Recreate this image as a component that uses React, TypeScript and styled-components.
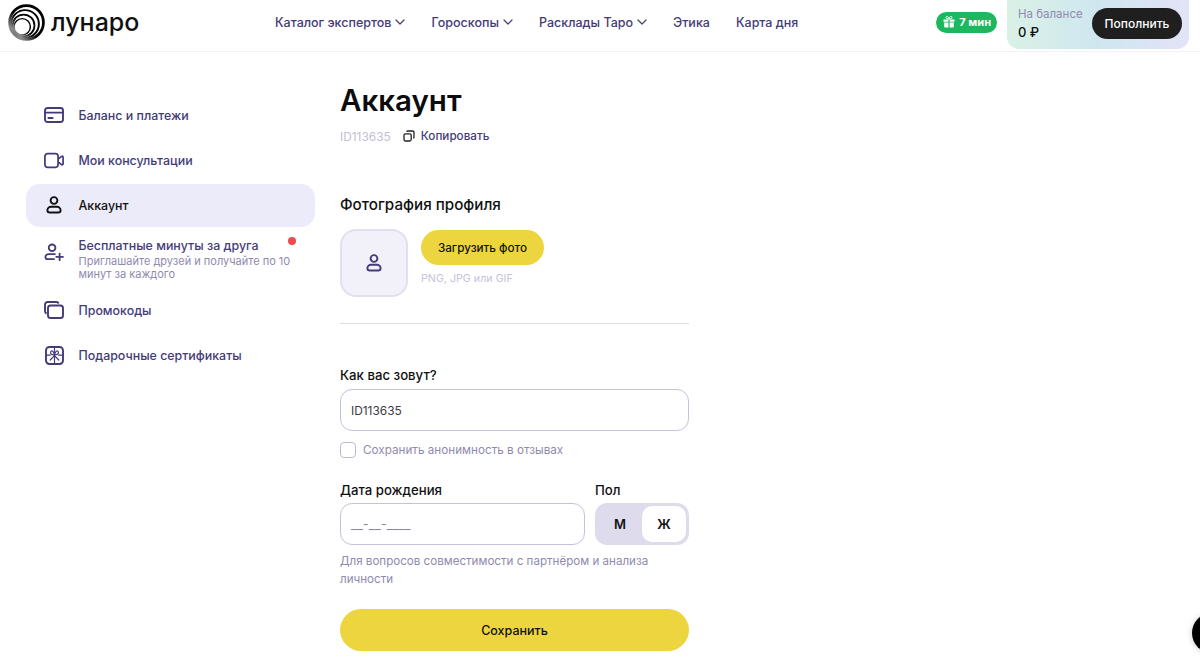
import React from 'react'
import styled, { createGlobalStyle } from 'styled-components'

const GlobalStyle = createGlobalStyle`
  html, body {
    margin: 0;
    padding: 0;
    height: 100%;
    overflow: hidden;
    background: #fff;
  }
  * { box-sizing: border-box; }
  body {
    font-family: Inter, "Noto Sans", sans-serif;
    color: #000;
  }
`

const INK = '#443b78'
const MUTED = '#8f8aae'

const Header = styled.header`
  height: 52px;
  border-bottom: 1px solid #f2f1f8;
  display: flex;
  align-items: center;
  padding: 0 11px 7px 8px;
`

const LogoLink = styled.div`
  display: flex;
  align-items: center;
  gap: 6px;
  width: 267px;
`

const LogoText = styled.span`
  font-size: 25px;
  font-weight: 500;
  color: #111;
  line-height: 1;
`

const Nav = styled.nav`
  display: flex;
  align-items: center;
  gap: 26px;
  flex: 1;
`

const NavItem = styled.a`
  display: flex;
  align-items: center;
  gap: 4px;
  font-size: 12.5px;
  font-weight: 500;
  color: ${INK};
`

const BonusPill = styled.div`
  display: flex;
  align-items: center;
  gap: 4px;
  height: 21px;
  padding: 0 6px 0 7px;
  margin-right: 10px;
  border-radius: 11px;
  background: #1cb85f;
  color: #fff;
  font-size: 11px;
  font-weight: 700;
`

const BalanceCard = styled.div`
  width: 182px;
  height: 49px;
  align-self: flex-start;
  padding: 0 7px 2px 11px;
  border-radius: 0 0 12px 12px;
  background: linear-gradient(90deg, #daf1e6 0%, #cfe6f0 50%, #e3e3f7 100%);
  display: flex;
  align-items: center;
  justify-content: space-between;
`

const BalanceInfo = styled.div`
  display: flex;
  flex-direction: column;
  gap: 3px;
`

const BalanceLabel = styled.span`
  font-size: 11.5px;
  color: ${MUTED};
`

const BalanceValue = styled.span`
  font-size: 13px;
  font-weight: 500;
  color: #111;
`

const TopUpButton = styled.button`
  width: 90px;
  height: 31px;
  border: 0;
  border-radius: 16px;
  background: #1f1f1f;
  color: #fff;
  font: 500 12px Inter, sans-serif;
  padding: 0;
`

const Page = styled.div`
  display: flex;
  align-items: flex-start;
  padding: 0 0 0 26px;
`

const Sidebar = styled.aside`
  width: 289px;
  margin-top: 42px;
  margin-right: 25px;
  display: flex;
  flex-direction: column;
  gap: 2px;
`

const SideItem = styled.a<{ $active?: boolean; $tall?: boolean }>`
  position: relative;
  display: flex;
  align-items: ${(p) => (p.$tall ? 'flex-start' : 'center')};
  gap: 14.5px;
  min-height: 43px;
  padding: ${(p) => (p.$tall ? '9px 18px 6px 18px' : '0 18px 1px')};
  border-radius: 14px;
  background: ${(p) => (p.$active ? '#ecebf9' : 'transparent')};
  color: ${(p) => (p.$active ? '#111' : INK)};
  font-size: 12.4px;
  font-weight: 500;
`

const SideIcon = styled.span<{ $tall?: boolean }>`
  width: 20px;
  height: 20px;
  flex: none;
  margin-top: ${(p) => (p.$tall ? '4px' : '0')};
  display: flex;
  align-items: center;
  justify-content: center;
`

const SideText = styled.div`
  display: flex;
  flex-direction: column;
`

const SideNote = styled.span`
  margin-top: 2px;
  font-size: 11px;
  line-height: 13px;
  font-weight: 400;
  color: ${MUTED};
`

const RedDot = styled.span`
  position: absolute;
  top: 8px;
  right: 19px;
  width: 8px;
  height: 8px;
  border-radius: 50%;
  background: #ee4b4f;
`

const Main = styled.main`
  width: 349px;
  padding-top: 29px;
`

const Title = styled.h1`
  margin: 0;
  font-size: 29.5px;
  line-height: 38px;
  font-weight: 600;
  color: #0c0c0c;
`

const IdRow = styled.div`
  display: flex;
  align-items: center;
  margin-top: 8px;
  height: 18px;
`

const IdText = styled.span`
  font-size: 11.9px;
  color: #c3c0d8;
  margin-right: 12px;
`

const CopyLink = styled.a`
  display: flex;
  align-items: center;
  gap: 6px;
  font-size: 11.7px;
  font-weight: 500;
  color: ${INK};
`

const SectionTitle = styled.h2`
  margin: 51px 0 0;
  font-size: 15.2px;
  line-height: 18px;
  font-weight: 500;
  color: #111;
`

const PhotoRow = styled.div`
  display: flex;
  gap: 13px;
  margin-top: 15px;
  padding-bottom: 26px;
  border-bottom: 1px solid #dddbe6;
`

const Avatar = styled.div`
  width: 68px;
  height: 68px;
  border-radius: 16px;
  background: #f2f1f9;
  border: 2px solid #e1dff2;
  display: flex;
  align-items: center;
  justify-content: center;
`

const PhotoActions = styled.div`
  display: flex;
  flex-direction: column;
  padding-top: 1px;
`

const UploadButton = styled.button`
  width: 123px;
  height: 35px;
  border: 0;
  border-radius: 18px;
  background: #ecd53f;
  color: #111;
  font: 500 11.7px Inter, sans-serif;
  padding: 0;
`

const PhotoHint = styled.span`
  margin-top: 7px;
  font-size: 10.7px;
  line-height: 14px;
  color: #c6c3da;
`

const FieldLabel = styled.label`
  display: block;
  font-size: 13.2px;
  line-height: 18px;
  font-weight: 500;
  color: #111;
  margin-bottom: 5px;
`

const RowLabel = styled(FieldLabel)`
  margin-bottom: 4px;
`

const NameField = styled.div`
  margin-top: 42px;
`

const TextInput = styled.div<{ $muted?: boolean }>`
  height: 42px;
  border: 1.5px solid #c5c1dd;
  border-radius: 12px;
  background: #fff;
  display: flex;
  align-items: center;
  padding: 0 10px;
  font-size: ${(p) => (p.$muted ? '13px' : '11.9px')};
  color: ${(p) => (p.$muted ? '#8b87a0' : '#3b3b45')};
`

const CheckRow = styled.div`
  display: flex;
  align-items: center;
  gap: 7px;
  margin-top: 10px;
  height: 17px;
  font-size: 11.7px;
  color: ${MUTED};
`

const CheckBox = styled.span`
  width: 16px;
  height: 16px;
  border: 1.5px solid #bdb9d6;
  border-radius: 4px;
`

const DateRow = styled.div`
  display: flex;
  gap: 10px;
  margin-top: 23px;
`

const DateField = styled.div`
  flex: 1;
`

const GenderField = styled.div`
  width: 94px;
`

const GenderSwitch = styled.div`
  height: 42px;
  padding: 3px;
  border-radius: 12px;
  background: #dedcec;
  display: flex;
`

const GenderOption = styled.div<{ $active?: boolean }>`
  flex: 1;
  border-radius: 10px;
  background: ${(p) => (p.$active ? '#fff' : 'transparent')};
  display: flex;
  align-items: center;
  justify-content: center;
  font-size: 13px;
  font-weight: 600;
  color: #111;
`

const DateHint = styled.p`
  margin: 7px 0 0;
  font-size: 11.6px;
  line-height: 18px;
  color: ${MUTED};
`

const SaveButton = styled.button`
  display: block;
  width: 100%;
  height: 42px;
  margin-top: 21px;
  border: 0;
  border-radius: 21px;
  background: #ecd53f;
  color: #111;
  font: 500 12.5px Inter, sans-serif;
`

const ChatBubble = styled.div`
  position: fixed;
  left: 1192px;
  top: 613px;
  width: 40px;
  height: 40px;
  border-radius: 50%;
  background: #000;
  box-shadow: 0 1px 6px rgba(0, 0, 0, 0.2);
`

const Chevron = () => (
  <svg width="10" height="6" viewBox="0 0 10 6" fill="none" stroke={INK} strokeWidth="1.2" strokeLinecap="round" strokeLinejoin="round">
    <path d="M1 1l4 4 4-4" />
  </svg>
)

const Logo = () => (
  <svg width="37" height="37" viewBox="0 0 38 38" fill="none">
    <defs>
      <linearGradient id="ring" x1="1" y1="0" x2="0" y2="1">
        <stop offset="0" stopColor="#000" />
        <stop offset="0.55" stopColor="#000" />
        <stop offset="0.82" stopColor="#8c8c8c" />
        <stop offset="1" stopColor="#555" />
      </linearGradient>
    </defs>
    <circle cx="19" cy="19" r="17.4" stroke="url(#ring)" strokeWidth="2.8" />
    <circle cx="17.5" cy="20.5" r="14.2" stroke="url(#ring)" strokeWidth="2" />
    <circle cx="16" cy="22" r="11.2" stroke="url(#ring)" strokeWidth="1.8" />
    <circle cx="14.6" cy="23.4" r="8.4" stroke="url(#ring)" strokeWidth="1.5" />
  </svg>
)

const UserIcon = ({ color = INK }: { color?: string }) => (
  <svg width="20" height="20" viewBox="0 0 20 20" fill="none" stroke={color} strokeWidth="1.9">
    <circle cx="10" cy="5.5" r="3.4" />
    <path d="M3.4 15.2c0-2.2 1.9-3.5 3.6-3.5h6c1.7 0 3.6 1.3 3.6 3.5 0 1.4-1 2.3-2.4 2.3H5.8c-1.4 0-2.4-.9-2.4-2.3z" />
  </svg>
)

const CardIcon = () => (
  <svg width="20" height="16" viewBox="0 0 20 16" fill="none" stroke={INK} strokeWidth="1.9" strokeLinecap="round">
    <rect x="1" y="1" width="18" height="14" rx="2.5" />
    <path d="M1 5.6h18" />
    <path d="M4.5 11h4" strokeWidth="2.2" />
  </svg>
)

const VideoIcon = () => (
  <svg width="22" height="17" viewBox="0 0 22 17" fill="none" stroke={INK} strokeWidth="1.9" strokeLinejoin="round">
    <rect x="1" y="1" width="14.5" height="15" rx="3" />
    <path d="M15.5 7l3.8-3c.7-.5 1.7 0 1.7.8v7.4c0 .8-1 1.3-1.7.8l-3.8-3" />
  </svg>
)

const AddUserIcon = () => (
  <svg width="21" height="19" viewBox="0 0 21 19" fill="none" stroke={INK} strokeWidth="1.9" strokeLinecap="round">
    <circle cx="8.5" cy="4.6" r="3.5" />
    <path d="M11.5 11.2H5c-1.9 0-3.5 1.2-3.5 3 0 1.4 1 2.3 2.4 2.3h6.6" />
    <path d="M16.4 10.6v7M12.9 14.1h7" />
  </svg>
)

const PromoIcon = () => (
  <svg width="20" height="18" viewBox="0 0 20 18" fill="none" stroke={INK} strokeWidth="1.9">
    <path d="M2.6 12.5c-.9-.3-1.6-1.1-1.6-2.2V3.6C1 2.2 2.2 1 3.6 1h8.8c1 0 1.9.6 2.3 1.5" />
    <rect x="4" y="4.5" width="15" height="12.5" rx="2.6" />
  </svg>
)

const GiftCardIcon = () => (
  <svg width="19" height="19" viewBox="0 0 19 19" fill="none" stroke={INK} strokeLinecap="round">
    <rect x="1" y="1" width="17" height="17" rx="3.4" strokeWidth="1.9" />
    <path d="M9.5 1v16.5" strokeWidth="1.2" />
    <path d="M1 9.2h4.4M13.6 9.2H18" strokeWidth="1.2" />
    <path d="M9.5 8.8C6.8 9 4.9 7.6 5.7 5.7c.7-1.5 3.2-1 3.8 3.1.6-4.1 3.1-4.6 3.8-3.1.8 1.9-1.1 3.3-3.8 3.1z" strokeWidth="1.2" />
    <path d="M9.5 9.6L5.2 14M9.5 9.6l4.3 4.4" strokeWidth="1.2" />
  </svg>
)

const GiftIcon = () => (
  <svg width="12" height="12" viewBox="0 0 12 12" fill="#fff">
    <path d="M.5 3.4h4.9v2.3H.5zM6.6 3.4h4.9v2.3H6.6zM1.2 6.6h4.2v5H2.4c-.7 0-1.2-.5-1.2-1.2zM6.6 6.6h4.2v3.8c0 .7-.5 1.2-1.2 1.2H6.6z" />
    <path d="M6 3C4.6 3 3 2.6 3 1.5 3 .6 4 .2 4.7.6 5.4 1 5.8 2 6 3c.2-1 .6-2 1.3-2.4C8 .2 9 .6 9 1.5 9 2.6 7.4 3 6 3z" fill="none" stroke="#fff" strokeWidth="1" />
  </svg>
)

const CopyIcon = () => (
  <svg width="12" height="12" viewBox="0 0 12 12" fill="none" stroke="#222" strokeWidth="1.3">
    <rect x="1" y="3.8" width="7.2" height="7.2" rx="1.5" />
    <path d="M3.8 1.9c.1-.5.6-.9 1.1-.9h4.6C10.3 1 11 1.7 11 2.5v4.6c0 .5-.4 1-.9 1.1" />
  </svg>
)

const navLinks = [
  { label: 'Каталог экспертов', menu: true },
  { label: 'Гороскопы', menu: true },
  { label: 'Расклады Таро', menu: true },
  { label: 'Этика', menu: false },
  { label: 'Карта дня', menu: false },
]

export default function App() {
  return (
    <>
      <GlobalStyle />
      <Header>
        <LogoLink>
          <Logo />
          <LogoText>лунаро</LogoText>
        </LogoLink>
        <Nav>
          {navLinks.map((link) => (
            <NavItem key={link.label}>
              {link.label}
              {link.menu && <Chevron />}
            </NavItem>
          ))}
        </Nav>
        <BonusPill>
          <GiftIcon />7 мин
        </BonusPill>
        <BalanceCard>
          <BalanceInfo>
            <BalanceLabel>На балансе</BalanceLabel>
            <BalanceValue>0 ₽</BalanceValue>
          </BalanceInfo>
          <TopUpButton>Пополнить</TopUpButton>
        </BalanceCard>
      </Header>
      <Page>
        <Sidebar>
          <SideItem>
            <SideIcon><CardIcon /></SideIcon>
            Баланс и платежи
          </SideItem>
          <SideItem>
            <SideIcon><VideoIcon /></SideIcon>
            Мои консультации
          </SideItem>
          <SideItem $active>
            <SideIcon><UserIcon color="#111" /></SideIcon>
            Аккаунт
          </SideItem>
          <SideItem $tall>
            <SideIcon $tall><AddUserIcon /></SideIcon>
            <SideText>
              Бесплатные минуты за друга
              <SideNote>Приглашайте друзей и получайте по 10 минут за каждого</SideNote>
            </SideText>
            <RedDot />
          </SideItem>
          <SideItem>
            <SideIcon><PromoIcon /></SideIcon>
            Промокоды
          </SideItem>
          <SideItem>
            <SideIcon><GiftCardIcon /></SideIcon>
            Подарочные сертификаты
          </SideItem>
        </Sidebar>
        <Main>
          <Title>Аккаунт</Title>
          <IdRow>
            <IdText>ID113635</IdText>
            <CopyLink>
              <CopyIcon />
              Копировать
            </CopyLink>
          </IdRow>
          <SectionTitle>Фотография профиля</SectionTitle>
          <PhotoRow>
            <Avatar>
              <UserIcon />
            </Avatar>
            <PhotoActions>
              <UploadButton>Загрузить фото</UploadButton>
              <PhotoHint>PNG, JPG или GIF</PhotoHint>
            </PhotoActions>
          </PhotoRow>
          <NameField>
            <FieldLabel>Как вас зовут?</FieldLabel>
            <TextInput>ID113635</TextInput>
          </NameField>
          <CheckRow>
            <CheckBox />
            Сохранить анонимность в отзывах
          </CheckRow>
          <DateRow>
            <DateField>
              <RowLabel>Дата рождения</RowLabel>
              <TextInput $muted>__-__-____</TextInput>
            </DateField>
            <GenderField>
              <RowLabel>Пол</RowLabel>
              <GenderSwitch>
                <GenderOption>М</GenderOption>
                <GenderOption $active>Ж</GenderOption>
              </GenderSwitch>
            </GenderField>
          </DateRow>
          <DateHint>Для вопросов совместимости с партнёром и анализа личности</DateHint>
          <SaveButton>Сохранить</SaveButton>
        </Main>
      </Page>
      <ChatBubble />
    </>
  )
}
